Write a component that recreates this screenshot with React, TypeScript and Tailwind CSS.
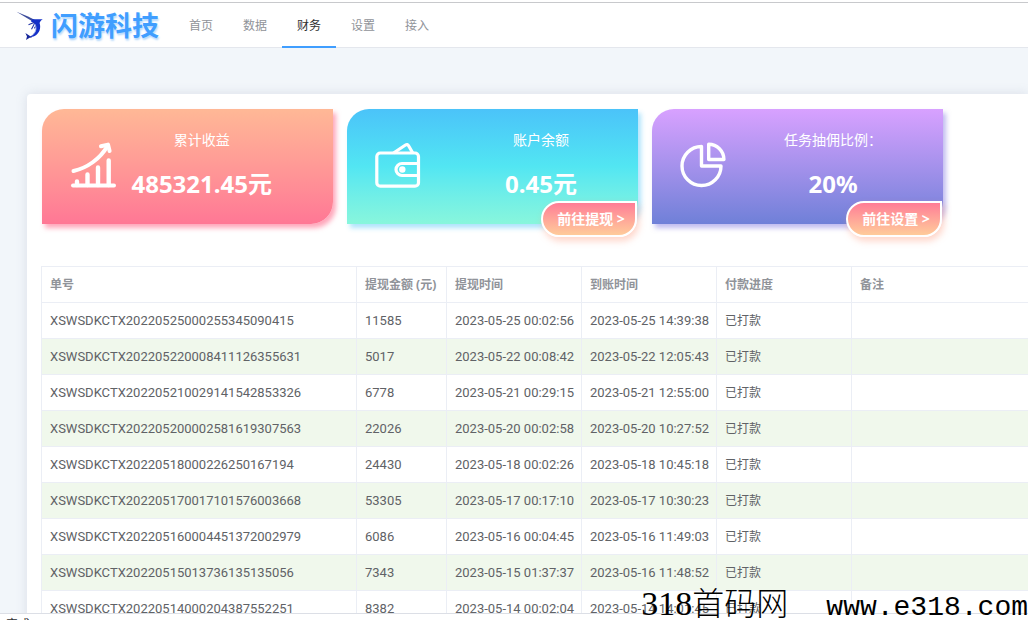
import clsx from 'clsx';
import type { ReactNode } from 'react';

const NAV_ITEMS = ['首页', '数据', '财务', '设置', '接入'];
const ACTIVE_NAV = '财务';

const COLUMNS = [
  { label: '单号', width: 'w-[315px]' },
  { label: '提现金额 (元)', width: 'w-[90px]' },
  { label: '提现时间', width: 'w-[135px]' },
  { label: '到账时间', width: 'w-[135px]' },
  { label: '付款进度', width: 'w-[135px]' },
  { label: '备注', width: '' },
];

const RECORDS = [
  { id: 'XSWSDKCTX20220525000255345090415', amount: 11585, applied: '2023-05-25 00:02:56', arrived: '2023-05-25 14:39:38' },
  { id: 'XSWSDKCTX202205220008411126355631', amount: 5017, applied: '2023-05-22 00:08:42', arrived: '2023-05-22 12:05:43' },
  { id: 'XSWSDKCTX202205210029141542853326', amount: 6778, applied: '2023-05-21 00:29:15', arrived: '2023-05-21 12:55:00' },
  { id: 'XSWSDKCTX202205200002581619307563', amount: 22026, applied: '2023-05-20 00:02:58', arrived: '2023-05-20 10:27:52' },
  { id: 'XSWSDKCTX20220518000226250167194', amount: 24430, applied: '2023-05-18 00:02:26', arrived: '2023-05-18 10:45:18' },
  { id: 'XSWSDKCTX202205170017101576003668', amount: 53305, applied: '2023-05-17 00:17:10', arrived: '2023-05-17 10:30:23' },
  { id: 'XSWSDKCTX202205160004451372002979', amount: 6086, applied: '2023-05-16 00:04:45', arrived: '2023-05-16 11:49:03' },
  { id: 'XSWSDKCTX20220515013736135135056', amount: 7343, applied: '2023-05-15 01:37:37', arrived: '2023-05-16 11:48:52' },
  { id: 'XSWSDKCTX20220514000204387552251', amount: 8382, applied: '2023-05-14 00:02:04', arrived: '2023-05-14 14:01:45' },
];

function FishLogo() {
  return (
    <svg viewBox="0 0 28 30" className="w-7 h-[30px]" aria-hidden="true">
      <path d="M0.5 0.8 L12 5.4 L19 9 L17.5 11 L10 6.6 Z" fill="#3d4d9c" />
      <path
        d="M16 8.2 C19 8 22 8.4 26.8 8.2 C25 9.4 24 10.4 23.6 12 C25.2 17 23.6 22.4 18.6 25 C16.4 26.2 14.4 26.2 13 26 C17 24.4 20 21 20 17.4 C20 14 18.6 12 15 10.4 Z"
        fill="#1430c8"
      />
      <path d="M14 25 L9.4 22 L11 25.6 L10 29 L13.6 26.8 L16 26.4 Z" fill="#16279a" />
      <path d="M18 11.5 L12.5 13.8 M18.5 12.5 L15.5 18.2 M20.5 14 L18.4 17.4" stroke="#2636a8" strokeWidth="1.1" fill="none" />
      <path d="M18.8 13 C21 17 20 21 16.5 24" stroke="#a9b8ee" strokeWidth="0.9" fill="none" />
    </svg>
  );
}

function GrowthIcon() {
  return (
    <svg viewBox="0 0 46 46" className="size-[46px] shrink-0" fill="none" stroke="currentColor" strokeWidth="4" strokeLinecap="round" strokeLinejoin="round" aria-hidden="true">
      <path d="M3 43.5H44" />
      <path d="M7 39.5V43M17.5 32.5V43M28 25.5V43M38.7 18.5V43" strokeWidth="4.4" />
      <path d="M3.5 29C17 26 30 17 37.5 4" />
      <path d="M31 4.2L38 2.6L39.6 9" />
    </svg>
  );
}

function WalletIcon() {
  return (
    <svg viewBox="0 0 46 46" className="size-[46px] shrink-0" fill="none" stroke="currentColor" strokeWidth="3.2" strokeLinejoin="round" aria-hidden="true">
      <rect x="1.8" y="11" width="41.7" height="33.2" rx="3.5" />
      <path d="M18.5 11L30.5 3Q32.4 1.8 33.6 3.8L37.8 11" />
      <path d="M43.5 21.5H27A6 6 0 0 0 27 33.5H43.5" />
      <circle cx="27.3" cy="27.5" r="3.2" fill="currentColor" stroke="none" />
    </svg>
  );
}

function PieIcon() {
  return (
    <svg viewBox="0 0 46 46" className="size-[46px] shrink-0" fill="none" stroke="currentColor" strokeWidth="3.4" strokeLinejoin="round" aria-hidden="true">
      <path d="M21.5 4.5V24H41A19.5 19.5 0 1 1 21.5 4.5Z" />
      <path d="M28.7 2.3A15.2 15.2 0 0 1 43.9 17.5H28.7Z" />
    </svg>
  );
}

type StatCardProps = {
  icon: ReactNode;
  label: string;
  value: string;
  action?: string;
  className: string;
};

function StatCard({ icon, label, value, action, className }: StatCardProps) {
  return (
    <section
      className={clsx(
        'relative flex items-center justify-between w-[291px] h-[115px] pl-7 pr-[61px] pb-[3px] rounded-tl-[22px] rounded-br-[22px] text-white',
        className,
      )}
    >
      {icon}
      <div className="flex flex-col items-center gap-[18px] whitespace-nowrap">
        <h2 className="text-sm">{label}</h2>
        <p className="text-2xl font-bold">{value}</p>
      </div>
      {action && (
        <button
          type="button"
          className="absolute right-px -bottom-[13px] w-24 h-9 pl-1 border-2 border-white rounded-[18px] rounded-tr-none bg-linear-to-b from-[#ff7c96] to-[#ffcb9a] text-sm font-bold shadow-[2px_4px_7px_rgba(255,150,120,0.4)]"
        >
          {action}
        </button>
      )}
    </section>
  );
}

export default function App() {
  return (
    <div className="relative flex flex-col h-screen overflow-hidden bg-[#f2f6fa] font-['Noto_Sans','Noto_Sans_CJK_SC',sans-serif]">
      <div className="h-0.5 shrink-0 bg-white" />
      <header className="flex items-stretch h-[46px] shrink-0 pl-4 bg-white border-t border-t-[#c8c9cc] border-b border-b-[#e4e7ed]">
        <a href="#home" className="flex items-center gap-[7px] w-[158px] pt-0.5">
          <FishLogo />
          <span className="text-[27px] leading-8 font-bold text-[#409eff] whitespace-nowrap [text-shadow:1px_2px_2px_#b5d8fb]">
            闪游科技
          </span>
        </a>
        <nav className="flex -mb-px">
          {NAV_ITEMS.map((item) => (
            <a
              key={item}
              href="#nav"
              aria-current={item === ACTIVE_NAV ? 'page' : undefined}
              className={clsx(
                'flex items-center px-[15px] pt-0.5 text-xs border-b-2',
                item === ACTIVE_NAV ? 'text-[#303133] border-[#409eff]' : 'text-[#909399] border-transparent',
              )}
            >
              {item}
            </a>
          ))}
        </nav>
      </header>

      <main className="flex-1 min-h-0 overflow-hidden pt-[46px] pl-[27px]">
        <div className="min-h-full pt-[15px] pl-[14px] rounded-tl-sm bg-white shadow-[0_0_12px_rgba(120,130,160,0.2)]">
          <div className="flex gap-[14px] pl-px">
            <StatCard
              icon={<GrowthIcon />}
              label="累计收益"
              value="485321.45元"
              className="bg-linear-to-b from-[#ffb896] to-[#ff7795] shadow-[3px_4px_5px_rgba(255,119,149,0.65)]"
            />
            <StatCard
              icon={<WalletIcon />}
              label="账户余额"
              value="0.45元"
              action="前往提现 >"
              className="bg-linear-to-b from-[#4bc3f9] via-[#52e6f2] to-[#88f6dc] shadow-[3px_4px_5px_rgba(75,195,249,0.45)]"
            />
            <StatCard
              icon={<PieIcon />}
              label="任务抽佣比例："
              value="20%"
              action="前往设置 >"
              className="bg-linear-to-b from-[#d8a1ff] to-[#6f80d8] shadow-[3px_4px_5px_rgba(130,120,225,0.5)]"
            />
          </div>

          <table className="w-full mt-[42px] table-fixed border-separate border-spacing-0 border-t border-l border-[#ebeef5] text-xs text-left text-[#606266]">
            <thead>
              <tr>
                {COLUMNS.map((column) => (
                  <th
                    key={column.label}
                    scope="col"
                    className={clsx('h-9 px-2 border-b border-r last:border-r-0 border-[#ebeef5] font-bold text-[#909399] whitespace-nowrap', column.width)}
                  >
                    {column.label}
                  </th>
                ))}
              </tr>
            </thead>
            <tbody>
              {RECORDS.map((record) => (
                <tr key={record.id} className="even:bg-[#f0f8ec] *:h-9 *:px-2 *:border-b *:border-r *:border-[#ebeef5] *:whitespace-nowrap *:last:border-r-0">
                  <td className="font-[Roboto] text-[13px]">{record.id}</td>
                  <td className="font-[Roboto] text-[13px]">{record.amount}</td>
                  <td className="font-[Roboto] text-[13px]">{record.applied}</td>
                  <td className="font-[Roboto] text-[13px]">{record.arrived}</td>
                  <td>已打款</td>
                  <td />
                </tr>
              ))}
            </tbody>
          </table>
        </div>
      </main>

      <footer className="h-[7px] shrink-0 overflow-hidden pl-1.5 pt-[3px] bg-white border-t border-[#dcdfe6] text-xs text-[#303133]">完成</footer>

      {/* Site watermark, drawn over the page */}
      <div className="absolute right-0 -bottom-1 flex items-baseline text-black leading-8 whitespace-nowrap pointer-events-none">
        <span className="font-['Liberation_Serif',serif] text-[34px]">318</span>
        <span className="font-['Noto_Sans_CJK_SC',sans-serif] font-light text-[32px]">首码网</span>
        <span className="ml-[38px] font-['Liberation_Mono',monospace] text-[28px]">www.e318.com</span>
      </div>
    </div>
  );
}
